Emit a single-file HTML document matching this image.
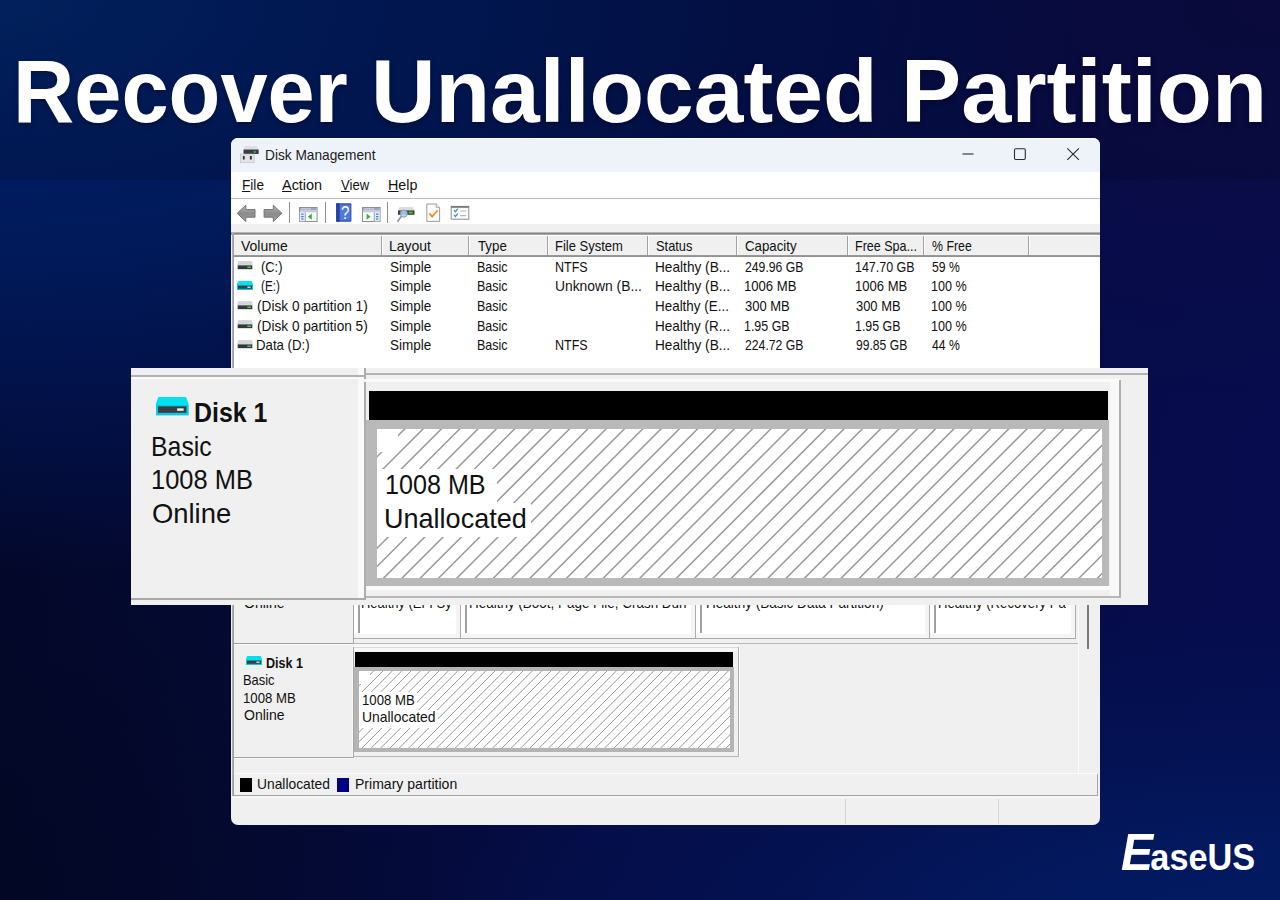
<!DOCTYPE html>
<html lang="en">
<head>
<meta charset="utf-8">
<title>Recover Unallocated Partition</title>
<style>
*{box-sizing:border-box;margin:0;padding:0}
html,body{width:1280px;height:900px;overflow:hidden}
body{position:relative;font-family:"Liberation Sans",sans-serif;background:#04134f;color:#111}
.b{position:absolute}
svg{position:absolute;overflow:visible}
.t{position:absolute;white-space:nowrap;line-height:1;transform-origin:0 0;color:#111}
span.logo{display:block}
span.logo::first-letter{font-size:52px;font-style:italic;letter-spacing:-3px}
h1{font-size:inherit;font-weight:inherit}
u{text-decoration:underline;text-decoration-thickness:1px;text-underline-offset:1px}
#bg{left:0;top:0;width:1280px;height:900px;
 background:
  radial-gradient(ellipse 1100px 570px at 0 0,rgba(2,40,108,1) 0%,rgba(0,28,94,1) 32%,rgba(1,26,90,.97) 46%,rgba(2,19,78,.85) 68%,rgba(4,12,54,0) 100%),
  radial-gradient(ellipse 840px 330px at 1260px 945px,rgba(3,27,98,1) 0%,rgba(3,26,96,.9) 30%,rgba(3,22,88,.55) 60%,rgba(3,18,78,0) 100%),
  radial-gradient(ellipse 640px 420px at 1280px 0,rgba(13,12,66,.85) 0%,rgba(13,12,66,0) 100%),
  radial-gradient(ellipse 520px 460px at 0 900px,rgba(2,4,22,.4) 0%,rgba(2,4,22,.2) 55%,rgba(2,4,22,0) 100%),
  linear-gradient(100deg,#03082a 0%,#040a34 22%,#050c46 55%,#060c4e 100%);}
#banner{left:0;top:0;width:1280px;height:180px;background:rgba(3,6,30,.2)}
</style>
</head>
<body>
<div id="bg" class="b"></div>
<div id="banner" class="b"></div>

<!-- window -->
<div id="window">
<div class="b" style="left:231px;top:138px;width:869px;height:687px;background:#f0f0f0;border-radius:7px"></div>
<div class="b" style="left:231px;top:138px;width:869px;height:34px;background:#eef3f9;border-radius:7px 7px 0 0;border-top:1px solid #fafcfe"></div>
<div class="b" style="left:231px;top:172px;width:869px;height:26px;background:#fff"></div>
<div class="b" style="left:231px;top:198px;width:869px;height:1px;background:#bcbcbc"></div>
<div class="b" style="left:231px;top:199px;width:869px;height:25px;background:#fff"></div>
<div class="b" style="left:231px;top:232px;width:869px;height:3px;background:linear-gradient(#c9c9c9,#8a8a8a 50%,#b2b2b2)"></div>
<div class="b" style="left:233px;top:235px;width:867px;height:1px;background:#fff"></div>
<div class="b" style="left:233px;top:236px;width:867px;height:19px;background:#f0f0f0"></div>
<div class="b" style="left:233px;top:255px;width:867px;height:2px;background:linear-gradient(#9c9c9c,#8e8e8e)"></div>
<div class="b" style="left:233px;top:257px;width:867px;height:115px;background:#fff"></div>
<div class="b" style="left:232px;top:233px;width:2px;height:563px;background:linear-gradient(90deg,#b8b8b8,#969696)"></div>
<div class="b" style="left:381px;top:236px;width:1px;height:19px;background:#a2a2a2"></div>
<div class="b" style="left:382px;top:236px;width:1px;height:19px;background:#fdfdfd"></div>
<div class="b" style="left:468px;top:236px;width:1px;height:19px;background:#a2a2a2"></div>
<div class="b" style="left:469px;top:236px;width:1px;height:19px;background:#fdfdfd"></div>
<div class="b" style="left:547px;top:236px;width:1px;height:19px;background:#a2a2a2"></div>
<div class="b" style="left:548px;top:236px;width:1px;height:19px;background:#fdfdfd"></div>
<div class="b" style="left:647px;top:236px;width:1px;height:19px;background:#a2a2a2"></div>
<div class="b" style="left:648px;top:236px;width:1px;height:19px;background:#fdfdfd"></div>
<div class="b" style="left:736px;top:236px;width:1px;height:19px;background:#a2a2a2"></div>
<div class="b" style="left:737px;top:236px;width:1px;height:19px;background:#fdfdfd"></div>
<div class="b" style="left:847px;top:236px;width:1px;height:19px;background:#a2a2a2"></div>
<div class="b" style="left:848px;top:236px;width:1px;height:19px;background:#fdfdfd"></div>
<div class="b" style="left:923px;top:236px;width:1px;height:19px;background:#a2a2a2"></div>
<div class="b" style="left:924px;top:236px;width:1px;height:19px;background:#fdfdfd"></div>
<div class="b" style="left:1028px;top:236px;width:1px;height:19px;background:#a2a2a2"></div>
<div class="b" style="left:1029px;top:236px;width:1px;height:19px;background:#fdfdfd"></div>
<svg style="left:237.3px;top:261.1px" width="16" height="9" viewBox="0 0 16 9"><path d="M1.2 0H14.8L16 4.3V8.6H0V4.3Z" fill="#dfe1e6"/><path d="M1.4 0.2H14.6L15.6 4.2H0.4Z" fill="#d3d5db"/><rect x="0.8" y="4.4" width="14.4" height="3.7" fill="#34383c"/><rect x="10.2" y="5.5" width="3.8" height="1.5" rx=".6" fill="#3fd23a"/></svg>
<svg style="left:237.3px;top:280.85px" width="16" height="9" viewBox="0 0 16 9"><path d="M1.2 0H14.8L16 3.2V9H0V3.2Z" fill="#00e1f2"/><path d="M0 4H16V9H0Z" fill="#0ccadb"/><rect x="1" y="4.6" width="14" height="3.2" fill="#3a3f45"/><rect x="10.4" y="5.6" width="3.2" height="1.2" fill="#f4f4f4"/></svg>
<svg style="left:237.3px;top:300.6px" width="16" height="9" viewBox="0 0 16 9"><path d="M1.2 0H14.8L16 4.3V8.6H0V4.3Z" fill="#dfe1e6"/><path d="M1.4 0.2H14.6L15.6 4.2H0.4Z" fill="#d3d5db"/><rect x="0.8" y="4.4" width="14.4" height="3.7" fill="#34383c"/><rect x="10.2" y="5.5" width="3.8" height="1.5" rx=".6" fill="#3fd23a"/></svg>
<svg style="left:237.3px;top:320.1px" width="16" height="9" viewBox="0 0 16 9"><path d="M1.2 0H14.8L16 4.3V8.6H0V4.3Z" fill="#dfe1e6"/><path d="M1.4 0.2H14.6L15.6 4.2H0.4Z" fill="#d3d5db"/><rect x="0.8" y="4.4" width="14.4" height="3.7" fill="#34383c"/><rect x="10.2" y="5.5" width="3.8" height="1.5" rx=".6" fill="#3fd23a"/></svg>
<svg style="left:237.3px;top:339.6px" width="16" height="9" viewBox="0 0 16 9"><path d="M1.2 0H14.8L16 4.3V8.6H0V4.3Z" fill="#dfe1e6"/><path d="M1.4 0.2H14.6L15.6 4.2H0.4Z" fill="#d3d5db"/><rect x="0.8" y="4.4" width="14.4" height="3.7" fill="#34383c"/><rect x="10.2" y="5.5" width="3.8" height="1.5" rx=".6" fill="#3fd23a"/></svg>
<svg style="left:240px;top:146px" width="19" height="17" viewBox="0 0 19 17"><path d="M4.8 0H17L18.6 3.4H3.4Z" fill="#dcdfe5"/><rect x="3.5" y="3.4" width="15.2" height="4.5" rx=".6" fill="#3a3e42"/><rect x="13.8" y="4.9" width="1.9" height="1.9" fill="#2fbf3a"/><rect x="0.3" y="8" width="13.8" height="8.7" fill="#e3e3e3" stroke="#bdbdbd" stroke-width=".6"/><rect x="2.9" y="10" width="1.8" height="3.4" rx=".5" fill="#2e2e2e"/><rect x="9.9" y="10" width="1.9" height="3.4" rx=".5" fill="#2e2e2e"/></svg>
<svg style="left:955px;top:140px" width="140" height="30" viewBox="955 140 140 30" fill="none" stroke="#2b2b2b" stroke-width="1.1"><path d="M962.5 154H973.5"/><rect x="1014.5" y="148.7" width="10.8" height="10.8" rx="1.2"/><path d="M1067.3 148.3L1078.9 159.9M1078.9 148.3L1067.3 159.9"/></svg>
<svg style="left:236px;top:203px" width="48" height="21" viewBox="236 203 48 21"><defs><linearGradient id="ga" x1="0" y1="0" x2="0" y2="1"><stop offset="0" stop-color="#b9b9b9"/><stop offset=".5" stop-color="#8b8b8b"/><stop offset="1" stop-color="#a2a2a2"/></linearGradient></defs><path d="M237.2 213.3L245.8 205.2V209.6H255V217.2H245.8V221.6Z" fill="url(#ga)" stroke="#727272" stroke-width="1" stroke-linejoin="round"/><path d="M281.9 213.3L273.3 205.2V209.6H264.1V217.2H273.3V221.6Z" fill="url(#ga)" stroke="#727272" stroke-width="1" stroke-linejoin="round"/></svg>
<div class="b" style="left:289px;top:202px;width:1px;height:21px;background:#8f8f8f"></div>
<div class="b" style="left:325px;top:202px;width:1px;height:21px;background:#8f8f8f"></div>
<div class="b" style="left:387px;top:202px;width:1px;height:21px;background:#8f8f8f"></div>
<svg style="left:299.3px;top:207px" width="19" height="15" viewBox="299.3 207 19 15"><rect x="299.8" y="207.5" width="17.6" height="14" fill="#fbfbfb" stroke="#8f8f8f"/><rect x="300.3" y="208" width="16.6" height="2.1" fill="#9fa5bb"/><rect x="301.3" y="208.5" width="10" height=".8" fill="#e4e7f0"/><rect x="300.3" y="210.1" width="16.6" height="2.2" fill="#c3c9de"/><rect x="300.1" y="212.3" width="5" height="9" fill="#e6eaf3"/><rect x="301.5" y="213.6" width="2.4" height="1.2" fill="#3b7fd2"/><rect x="301.5" y="216" width="2.4" height="1.2" fill="#3b7fd2"/><rect x="301.5" y="218.4" width="2.4" height="1.2" fill="#3b7fd2"/><rect x="305.1" y="212.3" width="0.9" height="9" fill="#8c95b2"/><path d="M312.1 213.6V219.8L308.1 216.7Z" fill="#3cb034"/></svg>
<svg style="left:361.7px;top:207px" width="19" height="15" viewBox="361.7 207 19 15"><rect x="362.2" y="207.5" width="17.6" height="14" fill="#fbfbfb" stroke="#8f8f8f"/><rect x="362.7" y="208" width="16.6" height="2.1" fill="#9fa5bb"/><rect x="363.7" y="208.5" width="10" height=".8" fill="#e4e7f0"/><rect x="362.7" y="210.1" width="16.6" height="2.2" fill="#c3c9de"/><rect x="374.3" y="212.3" width="5" height="9" fill="#e6eaf3"/><rect x="375.7" y="213.6" width="2.4" height="1.2" fill="#3b7fd2"/><rect x="375.7" y="216" width="2.4" height="1.2" fill="#3b7fd2"/><rect x="375.7" y="218.4" width="2.4" height="1.2" fill="#3b7fd2"/><rect x="373.5" y="212.3" width="0.9" height="9" fill="#8c95b2"/><path d="M366.3 213.6V219.8L370.3 216.7Z" fill="#3cb034"/></svg>
<svg style="left:336px;top:203px" width="16" height="19" viewBox="336 203 16 19"><rect x="336.2" y="203.2" width="15.2" height="18.6" rx="1" fill="#2c4fb4"/><rect x="336.2" y="203.2" width="3.2" height="18.6" fill="#24419f"/><rect x="339.8" y="204.6" width="10.6" height="15.8" fill="#4f79e0"/></svg>
<span class="t" style="left:340.6px;top:204.4px;font-size:18.4px;color:#fff;transform:scaleX(.82)">?</span>
<svg style="left:397px;top:206px" width="18" height="16" viewBox="397 206 18 16"><path d="M399.6 207H412.6L414.4 210.4H398Z" fill="#d8dbe2"/><rect x="398" y="210.4" width="16.5" height="4.4" fill="#3b3f43"/><rect x="408.6" y="211.6" width="4.2" height="2" fill="#35c738"/><circle cx="403.8" cy="213.6" r="3.5" fill="#b9d2f1" fill-opacity=".85" stroke="#8a98ad" stroke-width="1"/><path d="M401.2 216.6L397.8 221.2" stroke="#8c93a3" stroke-width="1.6" stroke-linecap="round"/></svg>
<svg style="left:426px;top:203px" width="15" height="19" viewBox="426 203 15 19"><path d="M426.8 204H436.2L439.6 207.4V221.4H426.8Z" fill="#fcfcfc" stroke="#9a9a9a" stroke-width="1"/><path d="M436.2 204V207.4H439.6" fill="#eee" stroke="#9a9a9a" stroke-width=".8"/><path d="M429.4 213.4L432.2 216.6L437.6 210.2" fill="none" stroke="#e8912d" stroke-width="1.7"/></svg>
<svg style="left:450px;top:205px" width="20" height="15" viewBox="450 205 20 15"><rect x="451.2" y="206.4" width="17.6" height="12.8" fill="#fdfdfd" stroke="#8d8d8d"/><rect x="451.2" y="206" width="17.6" height="1.8" fill="#777"/><path d="M454 210.2l1.4 1.5 2.4-3M454 215l1.4 1.5 2.4-3" fill="none" stroke="#3b8be0" stroke-width="1.3"/><path d="M460 211H466M460 215.6H466" stroke="#b8b8b8" stroke-width="1.2"/></svg>
<div class="b" style="left:234px;top:600px;width:118px;height:43px;background:#f0f0f0"></div>
<div class="b" style="left:353px;top:600px;width:1px;height:44px;background:#a6a6a6"></div>
<div class="b" style="left:354px;top:600px;width:106px;height:38px;background:#fff"></div>
<div class="b" style="left:456px;top:600px;width:4px;height:38px;background:#f5f5f5"></div>
<div class="b" style="left:354px;top:634px;width:106px;height:4px;background:#f5f5f5"></div>
<div class="b" style="left:358px;top:600px;width:1.5px;height:33px;background:#a0a0a0"></div>
<div class="b" style="left:460px;top:600px;width:1px;height:39px;background:#adadad"></div>
<div class="b" style="left:461px;top:600px;width:234px;height:38px;background:#fff"></div>
<div class="b" style="left:691px;top:600px;width:4px;height:38px;background:#f5f5f5"></div>
<div class="b" style="left:461px;top:634px;width:234px;height:4px;background:#f5f5f5"></div>
<div class="b" style="left:465px;top:600px;width:1.5px;height:33px;background:#a0a0a0"></div>
<div class="b" style="left:695px;top:600px;width:1px;height:39px;background:#adadad"></div>
<div class="b" style="left:696px;top:600px;width:233px;height:38px;background:#fff"></div>
<div class="b" style="left:925px;top:600px;width:4px;height:38px;background:#f5f5f5"></div>
<div class="b" style="left:696px;top:634px;width:233px;height:4px;background:#f5f5f5"></div>
<div class="b" style="left:700px;top:600px;width:1.5px;height:33px;background:#a0a0a0"></div>
<div class="b" style="left:929px;top:600px;width:1px;height:39px;background:#adadad"></div>
<div class="b" style="left:930px;top:600px;width:145px;height:38px;background:#fff"></div>
<div class="b" style="left:1071px;top:600px;width:4px;height:38px;background:#f5f5f5"></div>
<div class="b" style="left:930px;top:634px;width:145px;height:4px;background:#f5f5f5"></div>
<div class="b" style="left:934px;top:600px;width:1.5px;height:33px;background:#a0a0a0"></div>
<div class="b" style="left:1075px;top:600px;width:1px;height:39px;background:#adadad"></div>
<div class="b" style="left:354px;top:638px;width:722px;height:1px;background:#ababab"></div>
<div class="b" style="left:354px;top:643px;width:724px;height:1px;background:#b9b9b9"></div>
<div class="b" style="left:234px;top:643px;width:119px;height:1px;background:#a0a0a0"></div>
<div class="b" style="left:234px;top:644px;width:119px;height:1px;background:#fbfbfb"></div>
<div class="b" style="left:1078px;top:600px;width:1px;height:173px;background:#fbfbfb"></div>
<div class="b" style="left:1087px;top:600px;width:2px;height:49px;background:#7a7a7a"></div>
<div class="b" style="left:353px;top:647px;width:1px;height:111px;background:#a6a6a6"></div>
<div class="b" style="left:352px;top:647px;width:1px;height:111px;background:#f8f8f8"></div>
<div class="b" style="left:354px;top:644px;width:384px;height:7px;background:#f7f7f7"></div>
<div class="b" style="left:354px;top:647px;width:385px;height:1px;background:#d9d9d9"></div>
<div class="b" style="left:355px;top:652px;width:378px;height:15px;background:#000"></div>
<div class="b" style="left:354px;top:667px;width:380px;height:84.5px;background:#b4b4b4"></div>
<div class="b" style="left:359px;top:671px;width:370.5px;height:77px;background:#fff"></div>
<svg style="left:359px;top:671px;overflow:hidden" width="370.5" height="77" viewBox="0 0 370.5 77"><path d="M-72.7 78.0L6.3 -1M-63.3 78.0L15.7 -1M-54.0 78.0L25.0 -1M-44.7 78.0L34.3 -1M-35.3 78.0L43.7 -1M-26.0 78.0L53.0 -1M-16.7 78.0L62.3 -1M-7.3 78.0L71.7 -1M2.0 78.0L81.0 -1M11.3 78.0L90.3 -1M20.7 78.0L99.7 -1M30.0 78.0L109.0 -1M39.3 78.0L118.3 -1M48.7 78.0L127.7 -1M58.0 78.0L137.0 -1M67.3 78.0L146.3 -1M76.7 78.0L155.7 -1M86.0 78.0L165.0 -1M95.3 78.0L174.3 -1M104.7 78.0L183.7 -1M114.0 78.0L193.0 -1M123.3 78.0L202.3 -1M132.7 78.0L211.7 -1M142.0 78.0L221.0 -1M151.3 78.0L230.3 -1M160.7 78.0L239.7 -1M170.0 78.0L249.0 -1M179.3 78.0L258.3 -1M188.7 78.0L267.7 -1M198.0 78.0L277.0 -1M207.3 78.0L286.3 -1M216.7 78.0L295.7 -1M226.0 78.0L305.0 -1M235.3 78.0L314.3 -1M244.7 78.0L323.7 -1M254.0 78.0L333.0 -1M263.3 78.0L342.3 -1M272.7 78.0L351.7 -1M282.0 78.0L361.0 -1M291.3 78.0L370.3 -1M300.7 78.0L379.7 -1M310.0 78.0L389.0 -1M319.3 78.0L398.3 -1M328.7 78.0L407.7 -1M338.0 78.0L417.0 -1M347.3 78.0L426.3 -1M356.7 78.0L435.7 -1M366.0 78.0L445.0 -1" stroke="#989898" stroke-width="1.0" fill="none"/></svg>
<div class="b" style="left:359px;top:671px;width:11px;height:13px;background:#fff"></div>
<div class="b" style="left:359px;top:692px;width:58px;height:18px;background:#fff"></div>
<div class="b" style="left:359px;top:710px;width:79px;height:18px;background:#fff"></div>
<div class="b" style="left:738px;top:647px;width:1px;height:110px;background:#b0b0b0"></div>
<div class="b" style="left:739px;top:647px;width:1px;height:110px;background:#fafafa"></div>
<div class="b" style="left:354px;top:756px;width:385px;height:1px;background:#b6b6b6"></div>
<div class="b" style="left:234px;top:757px;width:119px;height:1px;background:#a0a0a0"></div>
<div class="b" style="left:234px;top:758px;width:119px;height:1px;background:#fbfbfb"></div>
<svg style="left:246px;top:655.8px" width="16" height="9" viewBox="0 0 16 9"><path d="M1.2 0H14.8L16 3.2V9H0V3.2Z" fill="#00e1f2"/><path d="M0 4H16V9H0Z" fill="#0ccadb"/><rect x="1" y="4.6" width="14" height="3.2" fill="#3a3f45"/><rect x="10.4" y="5.6" width="3.2" height="1.2" fill="#f4f4f4"/></svg>
<div class="b" style="left:234px;top:773px;width:863px;height:1px;background:#fcfcfc"></div>
<div class="b" style="left:234px;top:795px;width:864px;height:1px;background:#a5a5a5"></div>
<div class="b" style="left:231px;top:797px;width:869px;height:1px;background:#fafafa"></div>
<div class="b" style="left:1096.5px;top:774px;width:1.5px;height:22px;background:#a8a8a8"></div>
<div class="b" style="left:240px;top:778px;width:12px;height:13.5px;background:#000"></div>
<div class="b" style="left:337px;top:778px;width:12px;height:13.5px;background:#000082"></div>
<div class="b" style="left:845px;top:799px;width:1px;height:25px;background:#d4d4d4"></div>
<div class="b" style="left:998px;top:799px;width:1px;height:25px;background:#d4d4d4"></div>
<span class="t" style="left:264.85px;top:147.60px;font-size:14.4px;transform:scaleX(0.9524);color:#1b1b1b">Disk Management</span>
<span class="t" style="left:242.25px;top:178.10px;font-size:14.4px;transform:scaleX(0.9466)"><u>F</u>ile</span>
<span class="t" style="left:282.40px;top:178.10px;font-size:14.4px;transform:scaleX(1.0027)"><u>A</u>ction</span>
<span class="t" style="left:341.10px;top:178.10px;font-size:14.4px;transform:scaleX(0.9100)"><u>V</u>iew</span>
<span class="t" style="left:387.51px;top:178.10px;font-size:14.4px;transform:scaleX(0.9933)"><u>H</u>elp</span>
<span class="t" style="left:240.75px;top:238.95px;font-size:14.4px;transform:scaleX(0.9741)">Volume</span>
<span class="t" style="left:389.03px;top:238.95px;font-size:14.4px;transform:scaleX(0.9714)">Layout</span>
<span class="t" style="left:478.25px;top:238.95px;font-size:14.4px;transform:scaleX(0.9216)">Type</span>
<span class="t" style="left:555.35px;top:238.95px;font-size:14.4px;transform:scaleX(0.9032)">File System</span>
<span class="t" style="left:655.50px;top:238.95px;font-size:14.4px;transform:scaleX(0.8928)">Status</span>
<span class="t" style="left:744.50px;top:238.95px;font-size:14.4px;transform:scaleX(0.9200)">Capacity</span>
<span class="t" style="left:854.63px;top:238.95px;font-size:14.4px;transform:scaleX(0.8708)">Free Spa...</span>
<span class="t" style="left:932.00px;top:238.95px;font-size:14.4px;transform:scaleX(0.8571)">% Free</span>
<span class="t" style="left:260.75px;top:259.70px;font-size:14.4px;transform:scaleX(0.8951)">(C:)</span>
<span class="t" style="left:390.00px;top:259.70px;font-size:14.4px;transform:scaleX(0.9378)">Simple</span>
<span class="t" style="left:477.38px;top:259.70px;font-size:14.4px;transform:scaleX(0.8678)">Basic</span>
<span class="t" style="left:555.38px;top:259.70px;font-size:14.4px;transform:scaleX(0.8687)">NTFS</span>
<span class="t" style="left:654.55px;top:259.70px;font-size:14.4px;transform:scaleX(0.9491)">Healthy (B...</span>
<span class="t" style="left:744.50px;top:259.70px;font-size:14.4px;transform:scaleX(0.8504)">249.96 GB</span>
<span class="t" style="left:854.63px;top:259.70px;font-size:14.4px;transform:scaleX(0.8667)">147.70 GB</span>
<span class="t" style="left:932.00px;top:259.70px;font-size:14.4px;transform:scaleX(0.8484)">59 %</span>
<span class="t" style="left:260.75px;top:279.45px;font-size:14.4px;transform:scaleX(0.8151)">(E:)</span>
<span class="t" style="left:390.00px;top:279.45px;font-size:14.4px;transform:scaleX(0.9378)">Simple</span>
<span class="t" style="left:477.38px;top:279.45px;font-size:14.4px;transform:scaleX(0.8678)">Basic</span>
<span class="t" style="left:555.29px;top:279.45px;font-size:14.4px;transform:scaleX(0.9618)">Unknown (B...</span>
<span class="t" style="left:654.55px;top:279.45px;font-size:14.4px;transform:scaleX(0.9491)">Healthy (B...</span>
<span class="t" style="left:743.59px;top:279.45px;font-size:14.4px;transform:scaleX(0.9107)">1006 MB</span>
<span class="t" style="left:854.59px;top:279.45px;font-size:14.4px;transform:scaleX(0.9063)">1006 MB</span>
<span class="t" style="left:931.13px;top:279.45px;font-size:14.4px;transform:scaleX(0.8748)">100 %</span>
<span class="t" style="left:257.00px;top:299.20px;font-size:14.4px;transform:scaleX(0.9485)">(Disk 0 partition 1)</span>
<span class="t" style="left:390.00px;top:299.20px;font-size:14.4px;transform:scaleX(0.9378)">Simple</span>
<span class="t" style="left:477.38px;top:299.20px;font-size:14.4px;transform:scaleX(0.8678)">Basic</span>
<span class="t" style="left:654.57px;top:299.20px;font-size:14.4px;transform:scaleX(0.9329)">Healthy (E...</span>
<span class="t" style="left:744.50px;top:299.20px;font-size:14.4px;transform:scaleX(0.9031)">300 MB</span>
<span class="t" style="left:855.50px;top:299.20px;font-size:14.4px;transform:scaleX(0.8980)">300 MB</span>
<span class="t" style="left:931.13px;top:299.20px;font-size:14.4px;transform:scaleX(0.8748)">100 %</span>
<span class="t" style="left:257.00px;top:318.70px;font-size:14.4px;transform:scaleX(0.9485)">(Disk 0 partition 5)</span>
<span class="t" style="left:390.00px;top:318.70px;font-size:14.4px;transform:scaleX(0.9378)">Simple</span>
<span class="t" style="left:477.38px;top:318.70px;font-size:14.4px;transform:scaleX(0.8678)">Basic</span>
<span class="t" style="left:654.56px;top:318.70px;font-size:14.4px;transform:scaleX(0.9394)">Healthy (R...</span>
<span class="t" style="left:743.64px;top:318.70px;font-size:14.4px;transform:scaleX(0.8643)">1.95 GB</span>
<span class="t" style="left:854.64px;top:318.70px;font-size:14.4px;transform:scaleX(0.8594)">1.95 GB</span>
<span class="t" style="left:931.13px;top:318.70px;font-size:14.4px;transform:scaleX(0.8748)">100 %</span>
<span class="t" style="left:256.08px;top:338.20px;font-size:14.4px;transform:scaleX(0.9191)">Data (D:)</span>
<span class="t" style="left:390.00px;top:338.20px;font-size:14.4px;transform:scaleX(0.9378)">Simple</span>
<span class="t" style="left:477.38px;top:338.20px;font-size:14.4px;transform:scaleX(0.8678)">Basic</span>
<span class="t" style="left:555.38px;top:338.20px;font-size:14.4px;transform:scaleX(0.8687)">NTFS</span>
<span class="t" style="left:654.55px;top:338.20px;font-size:14.4px;transform:scaleX(0.9491)">Healthy (B...</span>
<span class="t" style="left:744.50px;top:338.20px;font-size:14.4px;transform:scaleX(0.8504)">224.72 GB</span>
<span class="t" style="left:855.50px;top:338.20px;font-size:14.4px;transform:scaleX(0.8430)">99.85 GB</span>
<span class="t" style="left:932.00px;top:338.20px;font-size:14.4px;transform:scaleX(0.8484)">44 %</span>
<span class="t" style="left:244.25px;top:595.50px;font-size:14.4px;transform:scaleX(0.9737)">Online</span>
<span class="t" style="left:361.00px;top:595.50px;font-size:14.4px;transform:scaleX(0.8999)">Healthy (EFI Sy</span>
<span class="t" style="left:469.27px;top:595.50px;font-size:14.4px;transform:scaleX(0.9346)">Healthy (Boot, Page File, Crash Dun</span>
<span class="t" style="left:706.06px;top:595.50px;font-size:14.4px;transform:scaleX(0.9414)">Healthy (Basic Data Partition)</span>
<span class="t" style="left:938.49px;top:595.50px;font-size:14.4px;transform:scaleX(0.9132)">Healthy (Recovery Pa</span>
<span class="t" style="left:265.50px;top:655.70px;font-size:14.4px;transform:scaleX(0.8727);font-weight:700">Disk 1</span>
<span class="t" style="left:243.35px;top:673.20px;font-size:14.4px;transform:scaleX(0.8972)">Basic</span>
<span class="t" style="left:243.33px;top:690.70px;font-size:14.4px;transform:scaleX(0.9152)">1008 MB</span>
<span class="t" style="left:244.25px;top:707.70px;font-size:14.4px;transform:scaleX(0.9737)">Online</span>
<span class="t" style="left:362.08px;top:692.70px;font-size:14.4px;transform:scaleX(0.9152)">1008 MB</span>
<span class="t" style="left:362.03px;top:710.20px;font-size:14.4px;transform:scaleX(0.9667)">Unallocated</span>
<span class="t" style="left:257.34px;top:777.40px;font-size:14.4px;transform:scaleX(0.9600)">Unallocated</span>
<span class="t" style="left:354.52px;top:777.40px;font-size:14.4px;transform:scaleX(0.9758)">Primary partition</span>
</div>
<!-- zoom overlay -->
<div id="zoom">
<div class="b" style="left:131px;top:368px;width:1017px;height:237px;background:#f0f0f0"></div>
<div class="b" style="left:358px;top:368px;width:6px;height:232px;background:#fafafa"></div>
<div class="b" style="left:131px;top:375px;width:233px;height:2px;background:#b1b1b1"></div>
<div class="b" style="left:131px;top:377px;width:227px;height:2px;background:#fbfbfb"></div>
<div class="b" style="left:364px;top:368px;width:2.3px;height:11px;background:#adadad"></div>
<div class="b" style="left:364px;top:381.5px;width:2.3px;height:218.5px;background:#adadad"></div>
<div class="b" style="left:366px;top:373px;width:782px;height:2px;background:#b3b3b3"></div>
<div class="b" style="left:366px;top:379px;width:755px;height:2.5px;background:#fbfbfb"></div>
<div class="b" style="left:131px;top:598px;width:235px;height:2px;background:#a9a9a9"></div>
<div class="b" style="left:366px;top:596px;width:755px;height:2px;background:#b9b9b9"></div>
<div class="b" style="left:1110px;top:381.5px;width:8.5px;height:214.5px;background:#f8f8f8"></div>
<div class="b" style="left:1118.5px;top:380px;width:2.5px;height:218px;background:#b0b0b0"></div>
<div class="b" style="left:368.5px;top:390.5px;width:739.5px;height:29px;background:#000"></div>
<div class="b" style="left:366.3px;top:419.5px;width:743.2px;height:166.8px;background:#b9b9b9"></div>
<div class="b" style="left:367px;top:586.3px;width:743px;height:3.7px;background:#fbfbfb"></div>
<div class="b" style="left:376.5px;top:428.5px;width:725.5px;height:149.5px;background:#fff"></div>
<svg style="left:376.5px;top:428.5px;overflow:hidden" width="725.5" height="149.5" viewBox="0 0 725.5 149.5"><path d="M-141.1 150.5L10.4 -1M-122.8 150.5L28.7 -1M-104.5 150.5L47.0 -1M-86.2 150.5L65.3 -1M-67.9 150.5L83.6 -1M-49.6 150.5L101.9 -1M-31.3 150.5L120.2 -1M-13.0 150.5L138.5 -1M5.3 150.5L156.8 -1M23.6 150.5L175.1 -1M41.9 150.5L193.4 -1M60.2 150.5L211.7 -1M78.5 150.5L230.0 -1M96.8 150.5L248.3 -1M115.1 150.5L266.6 -1M133.4 150.5L284.9 -1M151.7 150.5L303.2 -1M170.0 150.5L321.5 -1M188.3 150.5L339.8 -1M206.6 150.5L358.1 -1M224.9 150.5L376.4 -1M243.2 150.5L394.7 -1M261.5 150.5L413.0 -1M279.8 150.5L431.3 -1M298.1 150.5L449.6 -1M316.4 150.5L467.9 -1M334.7 150.5L486.2 -1M353.0 150.5L504.5 -1M371.3 150.5L522.8 -1M389.6 150.5L541.1 -1M407.9 150.5L559.4 -1M426.2 150.5L577.7 -1M444.5 150.5L596.0 -1M462.8 150.5L614.3 -1M481.1 150.5L632.6 -1M499.4 150.5L650.9 -1M517.7 150.5L669.2 -1M536.0 150.5L687.5 -1M554.3 150.5L705.8 -1M572.6 150.5L724.1 -1M590.9 150.5L742.4 -1M609.2 150.5L760.7 -1M627.5 150.5L779.0 -1M645.8 150.5L797.3 -1M664.1 150.5L815.6 -1M682.4 150.5L833.9 -1M700.7 150.5L852.2 -1M719.0 150.5L870.5 -1" stroke="#999" stroke-width="1.5" fill="none"/></svg>
<div class="b" style="left:376.5px;top:428.5px;width:21.5px;height:23.5px;background:#fff"></div>
<div class="b" style="left:376.5px;top:469px;width:120.5px;height:34px;background:#fff"></div>
<div class="b" style="left:376.5px;top:503px;width:154.5px;height:34px;background:#fff"></div>
<svg style="left:155.6px;top:397.4px" width="32.48" height="18.27" viewBox="0 0 16 9"><path d="M1.2 0H14.8L16 3.2V9H0V3.2Z" fill="#00e1f2"/><path d="M0 4H16V9H0Z" fill="#0ccadb"/><rect x="1" y="4.6" width="14" height="3.2" fill="#3a3f45"/><rect x="10.4" y="5.6" width="3.2" height="1.2" fill="#f4f4f4"/></svg>
<span class="t" style="left:193.60px;top:399.25px;font-size:27.8px;transform:scaleX(0.8951);font-weight:700">Disk 1</span>
<span class="t" style="left:151.01px;top:432.75px;font-size:27.8px;transform:scaleX(0.8945)">Basic</span>
<span class="t" style="left:150.97px;top:466.45px;font-size:27.8px;transform:scaleX(0.9162)">1008 MB</span>
<span class="t" style="left:151.82px;top:500.45px;font-size:27.8px;transform:scaleX(0.9849)">Online</span>
<span class="t" style="left:384.59px;top:471.15px;font-size:27.8px;transform:scaleX(0.9042)">1008 MB</span>
<span class="t" style="left:384.46px;top:505.45px;font-size:27.8px;transform:scaleX(0.9725)">Unallocated</span>
</div>
<!-- heading + logo -->

<h1><span class="t" style="left:13.21px;top:48.46px;font-size:88.6px;transform:scaleX(0.9573);font-weight:700;color:#fff;text-shadow:0 2px 5px rgba(0,0,24,.35)">Recover</span> <span class="t" style="left:371.21px;top:48.46px;font-size:88.6px;transform:scaleX(1.0086);font-weight:700;color:#fff;text-shadow:0 2px 5px rgba(0,0,24,.35)">Unallocated</span> <span class="t" style="left:901.16px;top:48.46px;font-size:88.6px;transform:scaleX(1.0188);font-weight:700;color:#fff;text-shadow:0 2px 5px rgba(0,0,24,.35)">Partition</span></h1>
<span class="t logo" style="left:1120.5px;top:825.6px;font-size:37.1px;line-height:52px;transform:scaleX(.925);font-weight:700;color:#fff">EaseUS</span>
</body>
</html>
